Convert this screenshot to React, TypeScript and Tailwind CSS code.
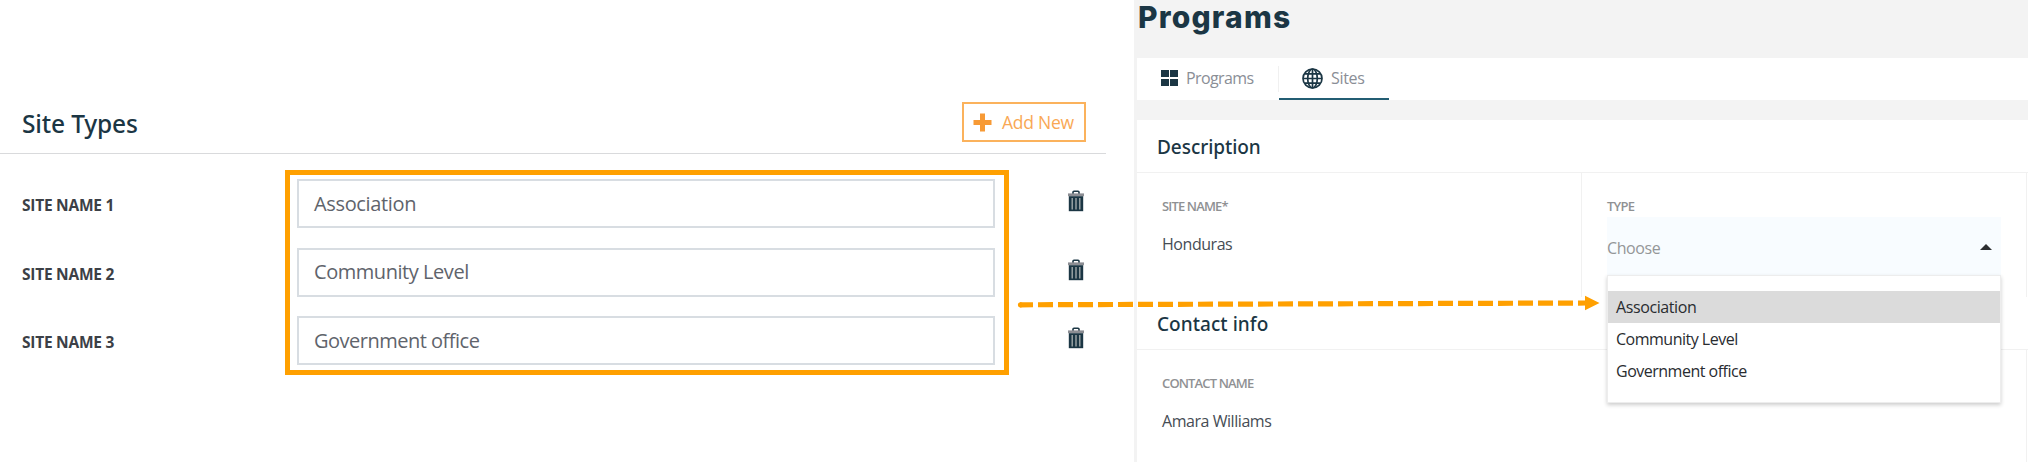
import React from 'react';

const SANS = "font-['Open_Sans','Noto_Sans',sans-serif]";

function Trash() {
  return (
    <svg width="18" height="22" viewBox="0 0 18 22" className="block">
      <path d="M6 4V2.2Q6 1.2 7 1.2H11Q12 1.2 12 2.2V4" fill="none" stroke="#1b3644" strokeWidth="1.6" />
      <rect x="1" y="3.4" width="16" height="2.8" fill="#8b8d93" />
      <path d="M1.8 6.2H16.2V21.2H1.8Z" fill="#1b3644" />
      <path d="M5.2 8V19.5M9 8V19.5M12.8 8V19.5" stroke="#a9b0b0" strokeWidth="1.3" />
    </svg>
  );
}

const siteTypes = [
  { label: 'SITE NAME 1', value: 'Association', track: 'tracking-[-0.35px]' },
  { label: 'SITE NAME 2', value: 'Community Level', track: 'tracking-[-0.45px]' },
  { label: 'SITE NAME 3', value: 'Government office', track: 'tracking-[-0.5px]' },
];

function SiteTypes() {
  return (
    <section className="relative w-[1134px] shrink-0 bg-white">
      <header className="flex h-[154px] w-[1106px] items-end justify-between border-b border-[#d9dadc] pb-[11px] pl-[22px] pr-[20px]">
        <h2 className="mb-[1px] font-['Noto_Sans',sans-serif] text-[24.5px] font-medium leading-[34px] tracking-[-0.15px] text-[#1b3644]">Site Types</h2>
        <button className="flex h-[40px] w-[124px] items-center border-2 border-[#fbb25c] pl-[9px] text-[#f9a855]">
          <svg width="19" height="19" viewBox="0 0 19 19"><path d="M7 0.5H12V7H18.5V12H12V18.5H7V12H0.5V7H7Z" fill="#f79a35" /></svg>
          <span className="ml-[10px] text-[17.5px] tracking-[-0.25px] leading-6">Add New</span>
        </button>
      </header>
      <div className="flex flex-col gap-[19.5px] pt-[25px]">
        {siteTypes.map((s) => (
          <div key={s.label} className="flex h-[49px] items-start">
            <span className="w-[275px] shrink-0 pl-[22px] pt-[14px] text-[15.5px] font-bold leading-[24px] tracking-[-0.25px] text-[#3c4046]">{s.label}</span>
            <div className={`ml-[22px] flex h-[49px] w-[698px] items-center border-2 border-[#d8dde2] pl-[15px] text-[20px] text-[#5f646c] ${s.track}`}>{s.value}</div>
            <span className="ml-[72px] mt-[11px]"><Trash /></span>
          </div>
        ))}
      </div>
      <div className="pointer-events-none absolute left-[285px] top-[170px] h-[205px] w-[724px] border-[5px] border-[#ffa000]" />
    </section>
  );
}

function Field({ label, value }: { label: string; value: string }) {
  return (
    <div className="pl-[25px] pt-[24px]">
      <div className="text-[13px] font-semibold leading-[18px] tracking-[-0.85px] text-[#8f9193]">{label}</div>
      <div className="mt-[17px] text-[16px] leading-[24px] tracking-[-0.45px] text-[#464c54]">{value}</div>
    </div>
  );
}

function Programs() {
  return (
    <section className="flex h-[462px] w-[894px] flex-col bg-[#f3f3f3] pl-[3px]">
      <h1 className="h-[58px] pl-[1px] font-['Inter',sans-serif] text-[30px] font-extrabold leading-[35px] tracking-[1.2px] text-[#1b3644]">Programs</h1>
      <nav className="flex h-[42px] bg-white text-[16px] leading-[24px] text-[#8a8e96]">
        <div className="flex w-[142px] pl-[24px] pt-[8px]">
          <svg width="17" height="16" viewBox="0 0 17 16" className="mt-[4px]"><path d="M0 0H8V7H0ZM9 0H17V7H9ZM0 9H8V16H0ZM9 9H17V16H9Z" fill="#1b3644" /></svg>
          <span className="ml-[8px] tracking-[-0.6px]">Programs</span>
        </div>
        <div className="mt-2 -ml-px h-[26px] w-px bg-[#f0f0f0]" />
        <div className="flex w-[110px] border-b-2 border-[#235d73] pl-[23px] pt-[8px]">
          <svg width="21" height="21" viewBox="0 0 21 21" className="mt-[1.5px]" fill="none" stroke="#1b3644" strokeWidth="1.7">
            <circle cx="10.5" cy="10.5" r="9.5" /><ellipse cx="10.5" cy="10.5" rx="4.8" ry="9.5" />
            <path d="M10.5 1V20M1 10.5H20M2.5 5.8H18.5M2.5 15.2H18.5" />
          </svg>
          <span className="ml-[8px] tracking-[-0.3px]">Sites</span>
        </div>
      </nav>
      <div className="mt-[20px] flex flex-1 flex-col bg-white">
        <h3 className="h-[53px] border-b border-[#f1f1f1] pl-[20px] pt-[13px] font-['Noto_Sans',sans-serif] text-[19px] font-medium leading-[28px] tracking-[-0.05px] text-[#1b3644]">Description</h3>
        <div className="flex h-[124px]">
          <div className="w-[445px] border-r border-[#f1f1f1]"><Field label="SITE NAME*" value="Honduras" /></div>
          <div className="w-[445px] border-r border-[#f1f1f1] pl-[25px] pt-[24px]">
            <div className="text-[13px] font-semibold leading-[18px] tracking-[-0.75px] text-[#8f9193]">TYPE</div>
            <div className="relative mt-[2px] h-[58px] w-[394px] bg-[#f8fcff]">
              <div className="flex h-full items-center justify-between pr-[9px] text-[16px] leading-6 tracking-[-0.4px] text-[#949698]">
                <span className="mt-[3px]">Choose</span>
                <svg width="12" height="6" viewBox="0 0 12 6" className="mt-[2px]"><path d="M0 6L6 0L12 6Z" fill="#2d2f31" /></svg>
              </div>
              <ul className="absolute left-0 top-[58px] h-[128px] w-[394px] border border-[#ededed] bg-white pt-[15px] text-[16px] leading-[32px] text-[#292c30] shadow-[0_2px_4px_rgba(0,0,0,0.2)]">
                <li className="bg-[#dbdbdb] pl-2 tracking-[-0.4px]">Association</li>
                <li className="pl-2 tracking-[-0.5px]">Community Level</li>
                <li className="pl-2 tracking-[-0.5px]">Government office</li>
              </ul>
            </div>
          </div>
        </div>
        <h3 className="h-[53px] border-b border-[#f1f1f1] pl-[20px] pt-[13px] font-['Noto_Sans',sans-serif] text-[19px] font-medium leading-[28px] tracking-[0.05px] text-[#1b3644]">Contact info</h3>
        <div className="w-[890px] flex-1 border-r border-[#f1f1f1]"><Field label="CONTACT NAME" value="Amara Williams" /></div>
      </div>
    </section>
  );
}

export default function App() {
  return (
    <main className={`relative flex h-[462px] w-[2028px] overflow-hidden bg-white ${SANS}`}>
      <SiteTypes />
      <Programs />
      <svg width="584" height="20" viewBox="0 0 584 20" className="absolute left-[1016px] top-[294px]">
        <path d="M4 10.8L570 9" stroke="#ffa000" strokeWidth="5.2" strokeDasharray="15 5" strokeDashoffset="2" />
        <circle cx="4.5" cy="10.8" r="2.6" fill="#ffa000" />
        <path d="M569 1.8V16.2L583.5 9Z" fill="#ffa000" />
      </svg>
    </main>
  );
}
